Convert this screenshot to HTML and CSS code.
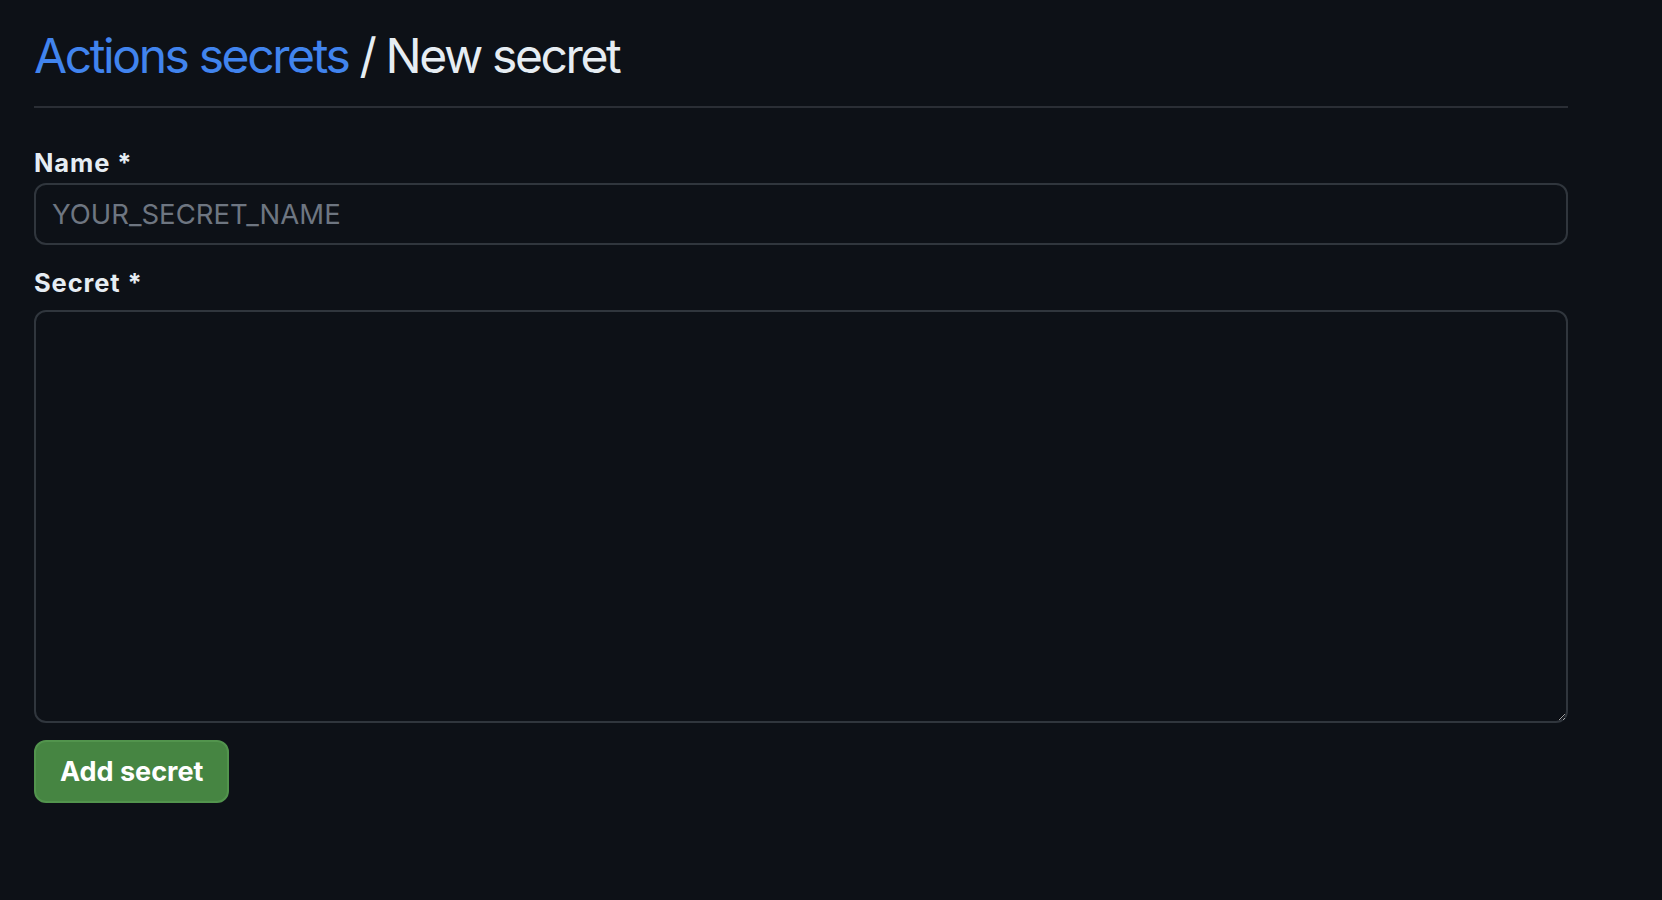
FILE: index.html
```html
<!DOCTYPE html>
<html lang="en">
<head>
<meta charset="utf-8">
<title>New secret</title>
<link rel="stylesheet" href="styles.css">
</head>
<body>
<main class="page">
  <div class="subhead">
    <h1 class="subhead-heading"><a class="crumb-link" href="#">Actions secrets</a> / New secret</h1>
  </div>
  <form class="secret-form">
    <label class="field-label label-name" for="secret-name">Name *</label>
    <input class="field-input" id="secret-name" type="text" placeholder="YOUR_SECRET_NAME">
    <label class="field-label label-secret" for="secret-value">Secret *</label>
    <textarea class="field-textarea" id="secret-value"></textarea>
    <button class="btn-primary" type="button">Add secret</button>
  </form>
</main>
</body>
</html>
```
FILE: styles.css
```css
html, body {
  margin: 0;
  padding: 0;
  background: #0d1117;
  color-scheme: dark;
}
body {
  font-family: Inter, "Noto Sans", "Liberation Sans", sans-serif;
  color: #e6edf3;
  height: 900px;
  overflow: hidden;
}
.page {
  width: 1534px;
  padding: 0 0 0 34px;
}
.subhead {
  padding-top: 32px;
  padding-bottom: 26px;
  border-bottom: 2px solid #2a2e35;
}
.subhead-heading {
  margin: 0;
  font-size: 48px;
  line-height: 48px;
  font-weight: 400;
  letter-spacing: -2.4px;
  color: #e6edf3;
}
.crumb-link {
  color: #4184ee;
  text-decoration: none;
}
.secret-form {
  display: flex;
  flex-direction: column;
  align-items: flex-start;
}
.field-label {
  display: block;
  font-size: 25.5px;
  line-height: 31px;
  font-weight: 700;
  letter-spacing: 0.9px;
  color: #e6edf3;
}
.label-name {
  margin-top: 39px;
}
.label-secret {
  margin-top: 22px;
}
.field-input {
  box-sizing: border-box;
  margin-top: 5px;
  width: 1534px;
  height: 62px;
  padding: 0 16px;
  border: 2px solid #30363d;
  border-radius: 12px;
  background: #0d1117;
  color: #e6edf3;
  font-family: inherit;
  font-size: 27.5px;
  outline: none;
}
.field-input::placeholder {
  color: #6e7681;
}
.field-textarea {
  display: block;
  box-sizing: border-box;
  margin-top: 12px;
  width: 1534px;
  height: 413px;
  padding: 16px;
  border: 2px solid #30363d;
  border-radius: 12px;
  background: #0d1117;
  color: #e6edf3;
  font-family: inherit;
  font-size: 27px;
  resize: vertical;
  outline: none;
}
.btn-primary {
  margin-top: 17px;
  box-sizing: border-box;
  height: 63px;
  padding: 0 24px;
  border: 2px solid #52944d;
  border-radius: 12px;
  background: #468542;
  color: #ffffff;
  font-family: inherit;
  font-size: 27px;
  font-weight: 700;
  cursor: pointer;
}
```
